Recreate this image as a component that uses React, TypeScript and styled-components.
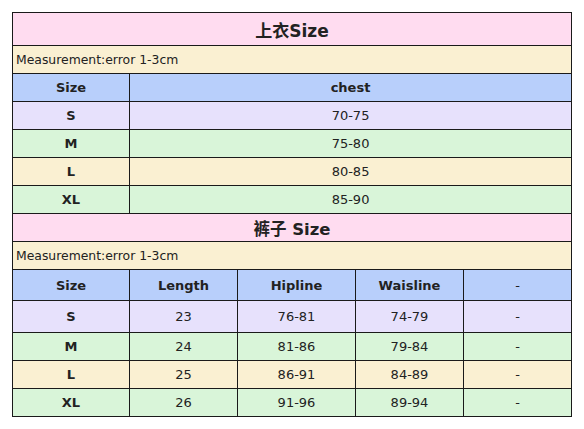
import React from 'react';
import styled, { createGlobalStyle } from 'styled-components';

const GlobalStyle = createGlobalStyle`
  body {
    margin: 0;
    background: #ffffff;
    font-family: 'DejaVu Sans', Verdana, 'Noto Sans CJK SC', sans-serif;
  }
`;

const Page = styled.div`
  padding: 12px 0 0 12px;
`;

const Table = styled.table`
  border-collapse: collapse;
  table-layout: fixed;
  width: 560px;
  color: #222;
  border: 1px solid #1a1a1a;
`;

const Row = styled.tr<{ $bg: string; $h: number }>`
  background: ${(p) => p.$bg};
  height: ${(p) => p.$h}px;
`;

const Cell = styled.td<{ $bold?: boolean }>`
  border: 1px solid #1a1a1a;
  padding: 0;
  text-align: center;
  vertical-align: middle;
  font-size: 13px;
  font-weight: ${(p) => (p.$bold ? 700 : 400)};
`;

const TitleCell = styled.td<{ $size: number }>`
  border: 1px solid #1a1a1a;
  padding: 0;
  text-align: center;
  font-size: ${(p) => p.$size}px;
  font-weight: 700;
  font-family: 'DejaVu Sans', 'Noto Sans CJK SC', sans-serif;
`;

const NoteCell = styled.td`
  border: 1px solid #1a1a1a;
  padding: 0 0 0 3px;
  text-align: left;
  font-size: 12.4px;
`;

const colors = {
  pink: '#ffdcf0',
  beige: '#faf0d2',
  blue: '#b8cffb',
  lavender: '#e7e1fc',
  green: '#d9f5d9',
};

const topRows = [
  { size: 'S', chest: '70-75', bg: colors.lavender },
  { size: 'M', chest: '75-80', bg: colors.green },
  { size: 'L', chest: '80-85', bg: colors.beige },
  { size: 'XL', chest: '85-90', bg: colors.green },
];

const pantsRows = [
  { size: 'S', len: '23', hip: '76-81', waist: '74-79', bg: colors.lavender, h: 32 },
  { size: 'M', len: '24', hip: '81-86', waist: '79-84', bg: colors.green, h: 28 },
  { size: 'L', len: '25', hip: '86-91', waist: '84-89', bg: colors.beige, h: 28 },
  { size: 'XL', len: '26', hip: '91-96', waist: '89-94', bg: colors.green, h: 28 },
];

const App = () => {
  return (
    <Page>
      <GlobalStyle />
      <Table>
        <colgroup>
          <col style={{ width: 117 }} />
          <col style={{ width: 108 }} />
          <col style={{ width: 118 }} />
          <col style={{ width: 108 }} />
          <col style={{ width: 108 }} />
        </colgroup>
        <tbody>
          <Row $bg={colors.pink} $h={33}>
            <TitleCell $size={17} colSpan={5}>上衣Size</TitleCell>
          </Row>
          <Row $bg={colors.beige} $h={28}>
            <NoteCell colSpan={5}>Measurement:error 1-3cm</NoteCell>
          </Row>
          <Row $bg={colors.blue} $h={28}>
            <Cell $bold>Size</Cell>
            <Cell $bold colSpan={4}>chest</Cell>
          </Row>
          {topRows.map((r) => (
            <Row key={r.size} $bg={r.bg} $h={28}>
              <Cell $bold>{r.size}</Cell>
              <Cell colSpan={4}>{r.chest}</Cell>
            </Row>
          ))}
          <Row $bg={colors.pink} $h={28}>
            <TitleCell $size={16.5} colSpan={5}>裤子 Size</TitleCell>
          </Row>
          <Row $bg={colors.beige} $h={28}>
            <NoteCell colSpan={5}>Measurement:error 1-3cm</NoteCell>
          </Row>
          <Row $bg={colors.blue} $h={31}>
            <Cell $bold>Size</Cell>
            <Cell $bold>Length</Cell>
            <Cell $bold>Hipline</Cell>
            <Cell $bold>Waisline</Cell>
            <Cell>-</Cell>
          </Row>
          {pantsRows.map((r) => (
            <Row key={r.size} $bg={r.bg} $h={r.h}>
              <Cell $bold>{r.size}</Cell>
              <Cell>{r.len}</Cell>
              <Cell>{r.hip}</Cell>
              <Cell>{r.waist}</Cell>
              <Cell>-</Cell>
            </Row>
          ))}
        </tbody>
      </Table>
    </Page>
  );
};

export default App;
